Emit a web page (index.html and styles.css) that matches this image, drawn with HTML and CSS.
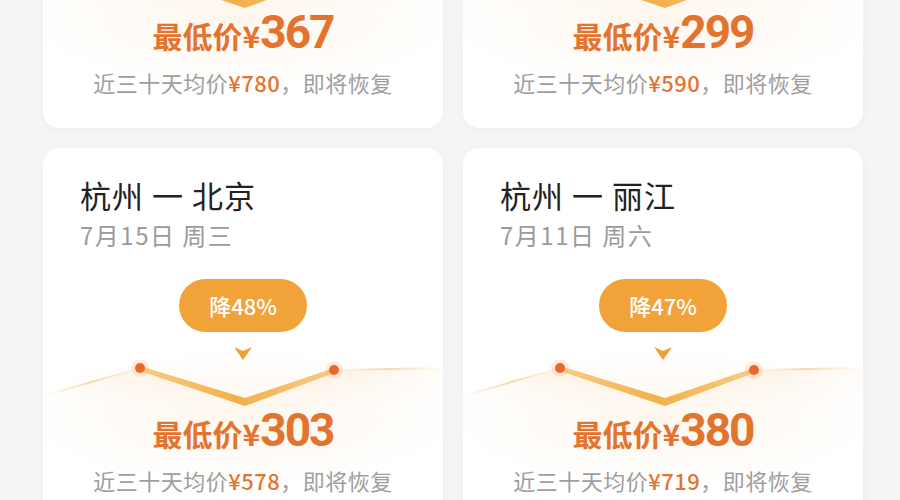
FILE: index.html
```html
<!DOCTYPE html>
<html lang="zh-CN">

<head>
    <meta charset="UTF-8">
    <meta name="viewport" content="width=device-width, initial-scale=1.0">
    <title>特价机票</title>
    <link rel="stylesheet" href="styles.css">
</head>

<body>
    <!-- shared drawing for the price trend under each badge -->
    <svg class="defs" width="0" height="0" aria-hidden="true">
        <defs>
            <linearGradient id="glowFill" x1="0" y1="0" x2="0" y2="1">
                <stop offset="0" stop-color="#fce4c6" stop-opacity="0.75" />
                <stop offset="1" stop-color="#fdf0e2" stop-opacity="0" />
            </linearGradient>
            <linearGradient id="glowFade" x1="0" y1="0" x2="1" y2="0">
                <stop offset="0" stop-color="white" stop-opacity="0.15" />
                <stop offset="0.3" stop-color="white" stop-opacity="0.8" />
                <stop offset="0.5" stop-color="white" stop-opacity="1" />
                <stop offset="0.7" stop-color="white" stop-opacity="0.8" />
                <stop offset="1" stop-color="white" stop-opacity="0.15" />
            </linearGradient>
            <mask id="glowMask" maskUnits="userSpaceOnUse" x="0" y="0" width="400" height="46">
                <rect width="400" height="46" fill="url(#glowFade)" />
            </mask>
            <linearGradient id="sideLine" x1="0" y1="0" x2="1" y2="0">
                <stop offset="0" stop-color="#f7dcb6" stop-opacity="0" />
                <stop offset="0.5" stop-color="#f5d3a4" stop-opacity="0.9" />
                <stop offset="1" stop-color="#f7dcb6" stop-opacity="0" />
            </linearGradient>
            <linearGradient id="ribbon" x1="0" y1="0" x2="1" y2="0">
                <stop offset="0" stop-color="#f7cd86" />
                <stop offset="0.5" stop-color="#f2b04a" />
                <stop offset="1" stop-color="#f7cd86" />
            </linearGradient>
            <symbol id="trend" viewBox="0 0 400 46">
                <polygon points="0,34 97,8 202,42 291,10 400,8 400,46 0,46" fill="url(#glowFill)" mask="url(#glowMask)" />
                <polyline points="0,36 97,8" fill="none" stroke="url(#sideLine)" stroke-width="2" />
                <polyline points="291,10 400,8" fill="none" stroke="url(#sideLine)" stroke-width="2" />
                <polygon points="97,6 202,38 291,8 291,13 202,46 97,11" fill="url(#ribbon)" />
                <circle cx="97" cy="8" r="9" fill="#f7a56c" opacity="0.2" />
                <circle cx="291" cy="10" r="9" fill="#f7a56c" opacity="0.2" />
                <circle cx="97" cy="8" r="5" fill="#e9692c" />
                <circle cx="291" cy="10" r="5" fill="#e9692c" />
            </symbol>
            <symbol id="pointer" viewBox="0 0 18 13">
                <path d="M0 0 L9 4 L18 0 L9 13 Z" fill="#f0a035" />
            </symbol>
        </defs>
    </svg>

    <div class="deal-list">
        <div class="deal-card">
            <div class="route">杭州 一 成都</div>
            <div class="date">7月18日 周六</div>
            <div class="deal">
                <span class="badge">降53%</span>
                <svg class="pointer"><use href="#pointer" /></svg>
                <svg class="trend"><use href="#trend" /></svg>
                <div class="price"><span class="label">最低价¥</span><span class="amount">367</span></div>
                <div class="avg">近三十天均价<span class="avg-price">¥780</span>，即将恢复</div>
            </div>
        </div>

        <div class="deal-card">
            <div class="route">杭州 一 厦门</div>
            <div class="date">7月12日 周日</div>
            <div class="deal">
                <span class="badge">降49%</span>
                <svg class="pointer"><use href="#pointer" /></svg>
                <svg class="trend"><use href="#trend" /></svg>
                <div class="price"><span class="label">最低价¥</span><span class="amount">299</span></div>
                <div class="avg">近三十天均价<span class="avg-price">¥590</span>，即将恢复</div>
            </div>
        </div>

        <div class="deal-card">
            <div class="route">杭州 一 北京</div>
            <div class="date">7月15日 周三</div>
            <div class="deal">
                <span class="badge">降48%</span>
                <svg class="pointer"><use href="#pointer" /></svg>
                <svg class="trend"><use href="#trend" /></svg>
                <div class="price"><span class="label">最低价¥</span><span class="amount">303</span></div>
                <div class="avg">近三十天均价<span class="avg-price">¥578</span>，即将恢复</div>
            </div>
        </div>

        <div class="deal-card">
            <div class="route">杭州 一 丽江</div>
            <div class="date">7月11日 周六</div>
            <div class="deal">
                <span class="badge">降47%</span>
                <svg class="pointer"><use href="#pointer" /></svg>
                <svg class="trend"><use href="#trend" /></svg>
                <div class="price"><span class="label">最低价¥</span><span class="amount">380</span></div>
                <div class="avg">近三十天均价<span class="avg-price">¥719</span>，即将恢复</div>
            </div>
        </div>
    </div>
</body>

</html>
```

FILE: styles.css
```css
body {
    font-family: "Noto Sans CJK SC", "Noto Sans", sans-serif;
    margin: 0;
    padding: 0 37px 0 43px;
    background-color: #f4f5f7;
    overflow: hidden;
}

.defs {
    position: absolute;
}

/* list is scrolled: the first row is partly above the fold */
.deal-list {
    display: grid;
    grid-template-columns: 1fr 1fr;
    gap: 20px;
    margin-top: -250px;
}

.deal-card {
    background-color: white;
    border-radius: 16px;
    box-shadow: 0 2px 12px rgba(0, 0, 0, 0.03);
    padding: 28px 0 31px;
    height: 378px;
    box-sizing: border-box;
}

.route {
    padding: 0 37px;
    font-size: 31px;
    line-height: 37px;
    letter-spacing: 1px;
    color: #222;
}

.date {
    padding: 0 37px;
    margin-top: 7px;
    font-size: 24px;
    line-height: 30px;
    letter-spacing: 1.5px;
    color: #9a9a9a;
}

.deal {
    display: flex;
    flex-direction: column;
    align-items: center;
    margin-top: 29px;
    background: radial-gradient(ellipse 55% 32% at 50% 64%, rgba(253, 234, 210, 0.4), rgba(255, 255, 255, 0));
}

.badge {
    min-width: 128px;
    height: 53px;
    line-height: 53px;
    border-radius: 27px;
    background-color: #f1a239;
    color: white;
    font-size: 22px;
    font-weight: 500;
    text-align: center;
}

.pointer {
    width: 18px;
    height: 13px;
    margin-top: 15px;
}

.trend {
    width: 100%;
    height: 46px;
    overflow: visible;
}

.price {
    display: flex;
    align-items: baseline;
    height: 48px;
    line-height: 48px;
    color: #e3732d;
    font-weight: bold;
}

.price .label {
    font-size: 30px;
}

.price .amount {
    font-family: Roboto, "Liberation Sans", sans-serif;
    font-size: 46px;
    letter-spacing: -2px;
}

.avg {
    margin-top: 11px;
    font-size: 22px;
    line-height: 30px;
    letter-spacing: 0.5px;
    color: #9e9e9e;
}

.avg-price {
    color: #e3732d;
    font-weight: 500;
}
```
